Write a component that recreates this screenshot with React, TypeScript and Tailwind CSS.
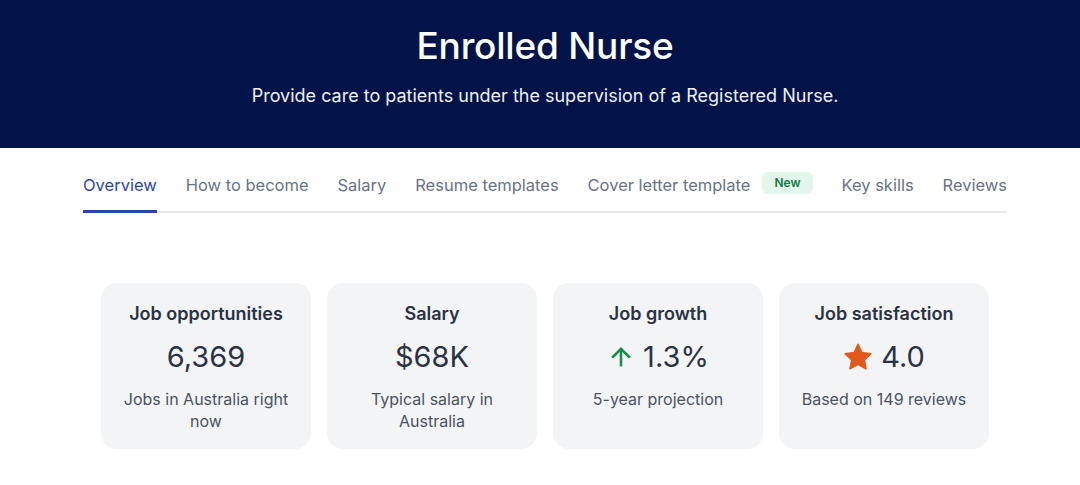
import { ArrowUp } from "lucide-react";

const tabs = [
  "Overview",
  "How to become",
  "Salary",
  "Resume templates",
  "Cover letter template",
  "Key skills",
  "Reviews",
];

function Star() {
  return (
    <svg viewBox="0 0 24 24" className="h-[30px] w-[30px]" fill="#e4571c">
      <path d="M12 1.8l3.1 6.6 7.2.9-5.3 5 1.4 7.1L12 17.9l-6.4 3.5L7 14.3l-5.3-5 7.2-.9z" strokeLinejoin="round" stroke="#e4571c" strokeWidth="1.2" />
    </svg>
  );
}

function StatCard({
  title,
  value,
  note,
  icon,
}: {
  title: string;
  value: string;
  note: string;
  icon?: React.ReactNode;
}) {
  return (
    <div className="flex h-[166px] w-[210px] flex-col items-center rounded-2xl bg-[#f3f4f6] px-5 pt-[19px] text-center">
      <h3 className="text-[18px] font-semibold leading-6 text-[#2a3344]">{title}</h3>
      <div className="mt-[13px] flex items-center gap-2 text-[29px] leading-9 text-[#2a3344]">
        {icon}
        <span>{value}</span>
      </div>
      <p className="mt-[13px] text-[16px] leading-[22px] text-[#4b5263]">{note}</p>
    </div>
  );
}

export default function App() {
  return (
    <div className="min-h-screen bg-white font-['Inter',sans-serif]">
      <header className="flex h-[148px] flex-col items-center bg-[#02134a] pl-[10px] text-white">
        <h1 className="mt-[24px] text-[37px] font-medium leading-[44px] tracking-[-0.2px]">Enrolled Nurse</h1>
        <p className="mt-[16px] text-[18px] leading-6 text-[#eef0f6]">
          Provide care to patients under the supervision of a Registered Nurse.
        </p>
      </header>

      <div className="pl-[10px]">
        <nav className="mx-auto mt-[24px] w-[924px] border-b-2 border-[#e8eaee]">
          <ul className="flex items-center justify-between text-[16.5px] text-[#697386]">
            {tabs.map((t, i) => (
              <li
                key={t}
                className={
                  i === 0
                    ? "-mb-[2px] flex h-[41px] items-start border-b-[3px] border-[#2946b0] pt-[1px] text-[#2946b0]"
                    : "-mb-[2px] flex h-[41px] items-start border-b-[3px] border-transparent pt-[1px]"
                }
              >
                {t}
                {t === "Cover letter template" && (
                  <span className="-mt-[1px] ml-3 rounded-md bg-[#e2f6ec] px-[12px] py-[3px] text-[12px] font-semibold leading-4 text-[#127a41]">
                    New
                  </span>
                )}
              </li>
            ))}
          </ul>
        </nav>

        <section className="mx-auto mt-[70px] flex w-[888px] gap-4">
          <StatCard title="Job opportunities" value="6,369" note="Jobs in Australia right now" />
          <StatCard title="Salary" value="$68K" note="Typical salary in Australia" />
          <StatCard
            title="Job growth"
            value="1.3%"
            note="5-year projection"
            icon={<ArrowUp className="h-7 w-7 text-[#1a8a4e]" strokeWidth={2.2} />}
          />
          <StatCard title="Job satisfaction" value="4.0" note="Based on 149 reviews" icon={<Star />} />
        </section>
      </div>
    </div>
  );
}
